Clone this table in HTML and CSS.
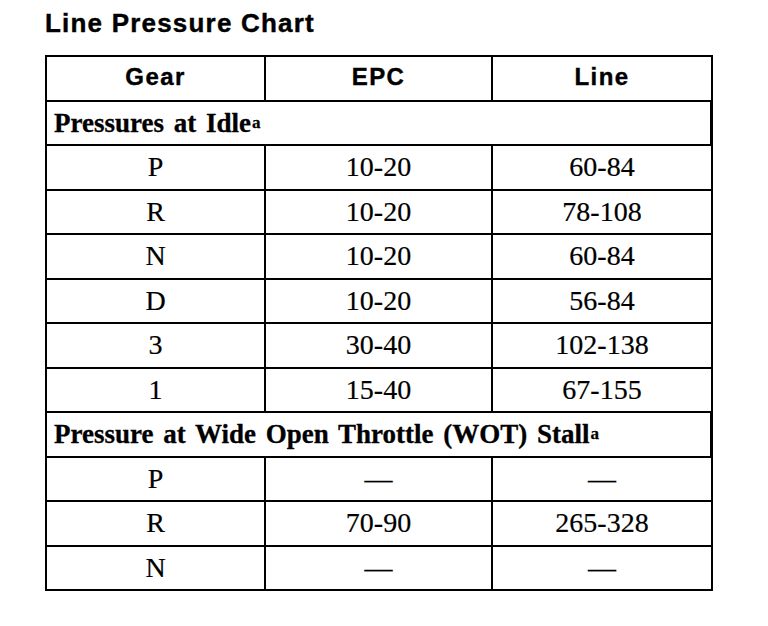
FILE: index.html
```html
<!DOCTYPE html>
<html lang="en">
<head>
<meta charset="utf-8">
<title>Line Pressure Chart</title>
<link rel="stylesheet" href="styles.css">
</head>
<body>
<div class="page">
  <h1 class="title">Line Pressure Chart</h1>
  <div class="chart">
    <div class="cell head">Gear</div>
    <div class="cell head">EPC</div>
    <div class="cell head">Line</div>

    <div class="cell section">Pressures at Idle<sup class="note">a</sup></div>

    <div class="cell">P</div><div class="cell">10-20</div><div class="cell">60-84</div>
    <div class="cell">R</div><div class="cell">10-20</div><div class="cell">78-108</div>
    <div class="cell">N</div><div class="cell">10-20</div><div class="cell">60-84</div>
    <div class="cell">D</div><div class="cell">10-20</div><div class="cell">56-84</div>
    <div class="cell">3</div><div class="cell">30-40</div><div class="cell">102-138</div>
    <div class="cell">1</div><div class="cell">15-40</div><div class="cell">67-155</div>

    <div class="cell section">Pressure at Wide Open Throttle (WOT) Stall<sup class="note">a</sup></div>

    <div class="cell">P</div><div class="cell">—</div><div class="cell">—</div>
    <div class="cell">R</div><div class="cell">70-90</div><div class="cell">265-328</div>
    <div class="cell">N</div><div class="cell">—</div><div class="cell">—</div>
  </div>
</div>
</body>
</html>
```
FILE: styles.css
```css
html, body {
  margin: 0;
  padding: 0;
  background: #fff;
  color: #000;
}

.page {
  padding: 9px 0 0 45px;
}

.title {
  margin: 0 0 17px 0;
  font-family: "Liberation Sans", Arial, sans-serif;
  font-weight: bold;
  font-size: 26px;
  line-height: 29px;
  letter-spacing: 1.2px;
  -webkit-text-stroke: 0.4px #000;
}

.chart {
  display: grid;
  grid-template-columns: 219px 227px 220px;
  grid-auto-rows: 44.5px;
  width: 666px;
  border-left: 2px solid #000;
  border-top: 2px solid #000;
}

.cell {
  display: flex;
  align-items: center;
  justify-content: center;
  border-right: 2px solid #000;
  border-bottom: 2px solid #000;
  font-family: "Liberation Serif", "Times New Roman", serif;
  font-size: 28px;
  line-height: 32px;
  -webkit-text-stroke: 0.2px #000;
}

.head {
  font-family: "Liberation Sans", Arial, sans-serif;
  font-weight: bold;
  font-size: 24px;
  letter-spacing: 1.4px;
  padding-bottom: 3px;
  -webkit-text-stroke: 0.4px #000;
}

.section {
  grid-column: 1 / -1;
  justify-content: flex-start;
  padding-left: 7px;
  font-weight: bold;
  font-size: 27px;
  word-spacing: 3px;
  border-right-width: 3px;
  -webkit-text-stroke: 0.3px #000;
}

.note {
  font-size: 17px;
  line-height: 0;
  vertical-align: 10px;
  font-weight: bold;
  margin-left: 1px;
}
```
